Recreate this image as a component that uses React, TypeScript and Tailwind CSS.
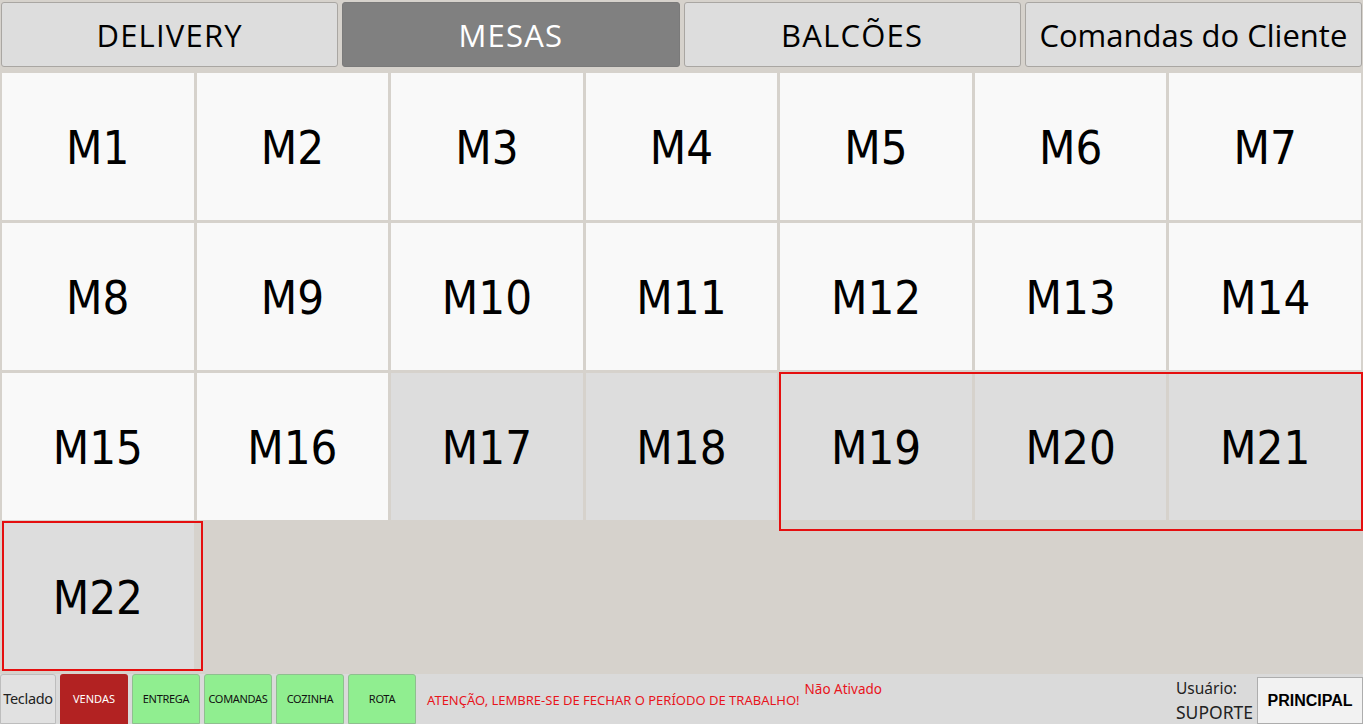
import { useState } from 'react';

const TABS = ['DELIVERY', 'MESAS', 'BALCÕES', 'Comandas do Cliente'];

// mesas ocupadas aparecem em cinza
const BUSY = [17, 18, 19, 20, 21, 22];

const MESAS = Array.from({ length: 22 }, (_, i) => i + 1);

const App = () => {
  const [tab, setTab] = useState('MESAS');

  return (
    <div className="flex h-[724px] w-[1363px] flex-col overflow-hidden bg-[#d6d2cc] font-['Open_Sans',sans-serif]">
      {/* Tabs */}
      <div className="flex h-[67px] gap-[4px] px-px pt-[2px]">
        {TABS.map((t) => (
          <button
            key={t}
            type="button"
            onClick={() => setTab(t)}
            className={`flex-1 rounded-[3px] border pt-[3px] text-[31px] leading-none ${
              t === t.toUpperCase() ? 'tracking-[1.2px]' : ''
            } ${
              tab === t
                ? 'border-[#7a7a7a] bg-[#808080] text-white'
                : 'border-[#a9a6a2] bg-[#dddddd] text-black'
            }`}
          >
            {t}
          </button>
        ))}
      </div>

      {/* Mesas */}
      <div className="relative h-[608px]">
        <div className="grid grid-cols-7 gap-[3px] px-[2px] pt-[6px]">
          {MESAS.map((n) => (
            <div
              key={n}
              className={`flex h-[147px] items-center justify-center pt-[4px] font-['DejaVu_Sans_Condensed','DejaVu_Sans',sans-serif] text-[47px] text-black ${
                BUSY.includes(n) ? 'bg-[#dddddd]' : 'bg-[#f9f9f9]'
              }`}
            >
              M{n}
            </div>
          ))}
        </div>
        <div className="pointer-events-none absolute left-[779px] top-[305px] h-[159px] w-[584px] border-2 border-[#e50f0f]" />
        <div className="pointer-events-none absolute left-[2px] top-[454px] h-[150px] w-[201px] border-2 border-[#e50f0f]" />
      </div>

      {/* Barra inferior */}
      <div className="flex flex-1 items-stretch bg-[#dadada] font-['Noto_Sans',sans-serif]">
        <button
          type="button"
          className="mr-[4px] w-[56px] rounded-t-[3px] border border-[#bdbdbd] bg-[#e1e1e1] text-[14.5px] tracking-[-0.3px] text-[#222]"
        >
          Teclado
        </button>
        <div className="flex gap-[4px]">
          <button
            type="button"
            className="w-[68px] rounded-t-[3px] bg-[#b22222] text-[11px] text-white"
          >
            VENDAS
          </button>
          {['ENTREGA', 'COMANDAS', 'COZINHA', 'ROTA'].map((b) => (
            <button
              key={b}
              type="button"
              className="w-[68px] rounded-t-[3px] border border-[#8fbf8f] bg-[#90ee90] text-[11px] tracking-[-0.3px] text-[#111]"
            >
              {b}
            </button>
          ))}
        </div>
        <p className="ml-[11px] self-center pt-[4px] text-[13px] text-[#e8141c]">
          ATENÇÃO, LEMBRE-SE DE FECHAR O PERÍODO DE TRABALHO!
        </p>
        <p className="ml-[5px] pt-[5px] text-[13.5px] text-[#e8141c]">Não Ativado</p>
        <div className="ml-auto mr-[4px] flex flex-col justify-center pt-[2px] leading-[24px] text-[#222]">
          <span className="text-[15.5px]">Usuário:</span>
          <span className="text-[17.5px]">SUPORTE</span>
        </div>
        <button
          type="button"
          className="mt-[3px] w-[106px] border border-[#adadad] bg-[#f2f2f2] font-['Liberation_Sans',sans-serif] text-[16px] font-bold text-black"
        >
          PRINCIPAL
        </button>
      </div>
    </div>
  );
};

export default App;
